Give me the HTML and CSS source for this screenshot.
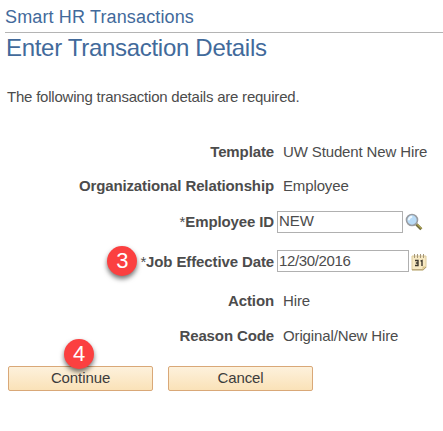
FILE: index.html
```
<!DOCTYPE html>
<html lang="en">
<head>
  <meta charset="UTF-8">
  <title>Smart HR Transactions</title>
  <link rel="stylesheet" href="styles.css">
</head>
<body>
  <header class="page-header">
    <h1>Smart HR Transactions</h1>
    <h2>Enter Transaction Details</h2>
  </header>

  <p class="intro">The following transaction details are required.</p>

  <form class="details">
    <div class="row">
      <div class="label">Template</div>
      <div class="value">UW Student New Hire</div>
    </div>
    <div class="row row-up">
      <div class="label">Organizational Relationship</div>
      <div class="value">Employee</div>
    </div>
    <div class="row">
      <label class="label" for="emplid"><span class="req">*</span>Employee ID</label>
      <div class="field">
        <input type="text" id="emplid" class="emplid" value="NEW">
        <svg class="lookup" width="18" height="18" viewBox="0 0 18 18">
          <path d="M11.3 11.3l5 4.9" stroke="#6f6a3c" stroke-width="3"/>
          <path d="M12.2 11.4l4.4 4.2" stroke="#b5ab55" stroke-width="1.2"/>
          <circle cx="7" cy="7" r="5.5" fill="#b9dcf8" stroke="#9a9da2" stroke-width="1.6"/>
          <path d="M3.8 7.2a3.4 3.4 0 0 1 3.4-3.4" fill="none" stroke="#eef8ff" stroke-width="2"/>
        </svg>
      </div>
    </div>
    <div class="row row-date">
      <label class="label" for="jobdate"><span class="step step-3">3</span><span class="label-text"><span class="req">*</span>Job Effective Date</span></label>
      <div class="field">
        <input type="text" id="jobdate" class="jobdate" value="12/30/2016">
        <svg class="calendar" width="16" height="18" viewBox="0 0 16 18">
          <path d="M1 3h14v11l-3 3H1z" fill="#f7e9c3" stroke="#dccb9c"/>
          <path d="M1 16.8h11.4L15.2 14" fill="none" stroke="#a8966a"/>
          <path d="M11.5 16.5v-3h3.5z" fill="#d9c48b"/>
          <path d="M3.5 1v4M6.5 1v4M9.5 1v4M12.5 1v4" stroke="#a5977a"/>
          <path d="M4 7.5h3v5H4M4.8 10H7M9.5 8.2l1.5-.7V13" fill="none" stroke="#3d382e" stroke-width="1.4"/>
        </svg>
      </div>
    </div>
    <div class="row">
      <div class="label">Action</div>
      <div class="value">Hire</div>
    </div>
    <div class="row">
      <div class="label">Reason Code</div>
      <div class="value">Original/New Hire</div>
    </div>

    <div class="buttons">
      <button type="button" class="btn">Continue<span class="step step-4">4</span></button>
      <button type="button" class="btn">Cancel</button>
    </div>
  </form>
</body>
</html>
```
FILE: styles.css
```
* { box-sizing: border-box; }

body {
  margin: 0;
  background: #fff;
  color: #4c4c4c;
  font-family: "Liberation Sans", Arial, sans-serif;
  font-size: 15px;
  line-height: 18px;
}

/* Headings */
.page-header { padding-left: 5px; color: #426a9b; }
.page-header h1 {
  height: 33px;
  margin: 0;
  padding-top: 6px;
  border-bottom: 1px solid #b4b4b4;
  font-size: 18px;
  font-weight: normal;
  letter-spacing: .14px;
  line-height: 22px;
}
.page-header h2 {
  margin: 0;
  padding-left: 1px;
  font-size: 24px;
  font-weight: normal;
  letter-spacing: -.3px;
  line-height: 30px;
}

.intro { margin: 25px 0 28px 7px; letter-spacing: -.22px; }

/* Transaction rows */
.row {
  display: grid;
  grid-template-columns: 274px 1fr;
  align-items: center;
  height: 35px;
}
.row-up { padding-bottom: 2px; }
.row-date { height: 44px; }
.label {
  text-align: right;
  font-weight: bold;
  letter-spacing: -.12px;
  white-space: nowrap;
}
.req { font-weight: normal; }
.value { padding-left: 9px; letter-spacing: -.13px; white-space: nowrap; }

.field { display: flex; align-items: center; padding-left: 3px; }
.field input {
  height: 22px;
  padding: 0 0 2px 1px;
  border: 1px solid #b0b0b0;
  border-radius: 0;
  background: #fff;
  color: #4c4c4c;
  font: inherit;
  letter-spacing: -.1px;
}
.emplid { width: 126px; }
.field .jobdate { width: 132px; padding-bottom: 1px; letter-spacing: -.35px; }
.lookup { margin: 1px 0 0 2px; }
.calendar { margin: 1px 0 0 2px; }

.row-date .label {
  display: flex;
  justify-content: flex-end;
  align-items: center;
}
.label-text { padding-top: 2px; }

/* Buttons */
.buttons { display: flex; gap: 15px; padding: 13px 0 0 8px; }
.btn {
  position: relative;
  width: 145px;
  height: 25px;
  padding: 0 0 2px;
  border: 1px solid #d9a878;
  border-radius: 2px;
  background: linear-gradient(#fdf1dc, #fae2b8);
  color: #3c3c3c;
  font: inherit;
  letter-spacing: -.1px;
}

/* Numbered step markers */
.step {
  width: 30px;
  height: 30px;
  border-radius: 50%;
  background: #fb4040;
  box-shadow: 0 3px 5px rgba(0, 0, 0, .55);
  color: #fff;
  font-size: 22px;
  font-weight: normal;
  line-height: 30px;
  text-align: center;
}
.step-3 { margin-right: 3px; }
.step-4 { position: absolute; top: -28px; left: 55px; }
```
